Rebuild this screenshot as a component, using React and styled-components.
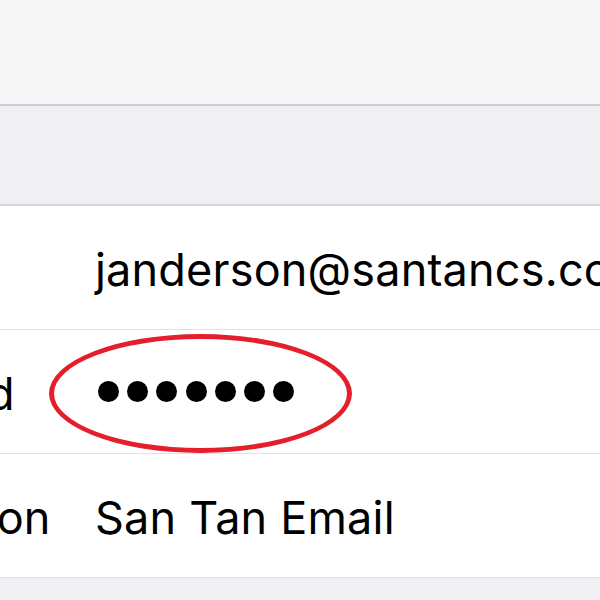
import React from "react";
import styled, { createGlobalStyle } from "styled-components";

const Global = createGlobalStyle`
  html, body { margin: 0; padding: 0; background: #efeff4; }
  body { font-family: Inter, "Noto Sans", sans-serif; overflow: hidden; }
`;

const Page = styled.div`
  width: 600px;
  height: 600px;
  overflow: hidden;
  background: #efeff4;
  display: flex;
  flex-direction: column;
`;

const TopBar = styled.div`
  height: 104px;
  background: #f7f7f8;
  border-bottom: 2px solid #cfced3;
  flex-shrink: 0;
`;

const SectionGap = styled.div`
  height: 98px;
  background: #efeff4;
  border-bottom: 2px solid #d6d5da;
  flex-shrink: 0;
`;

const Group = styled.div`
  background: #fff;
  display: flex;
  flex-direction: column;
  flex-shrink: 0;
`;

const Row = styled.div`
  position: relative;
  height: 123px;
  display: grid;
  grid-template-columns: 290px 1fr;
  align-items: center;
  margin-left: -195px;
  border-bottom: 1.5px solid #e1e1e4;
  white-space: nowrap;
`;

const Label = styled.span`
  font-size: 45px;
  color: #000;
  letter-spacing: 0.2px;
  padding-top: 3px;
`;

const Value = styled.span`
  font-size: 45px;
  color: #000;
  letter-spacing: 0.2px;
  padding-top: 3px;
`;

const Dots = styled.div`
  display: flex;
  gap: 8.2px;
  padding-left: 3px;
`;

const Dot = styled.span`
  width: 21px;
  height: 21px;
  border-radius: 50%;
  background: #000;
`;

const Circle = styled.div`
  position: absolute;
  left: 244px;
  top: 4px;
  width: 293px;
  height: 109px;
  border: 5px solid #e41f2b;
  border-radius: 50%;
  pointer-events: none;
`;

export default function App() {
  return (
    <Page>
      <Global />
      <TopBar />
      <SectionGap />
      <Group>
        <Row>
          <Label>Email</Label>
          <Value>janderson@santancs.com</Value>
        </Row>
        <Row>
          <Label>Password</Label>
          <Dots>
            {Array.from({ length: 7 }).map((_, i) => (
              <Dot key={i} />
            ))}
          </Dots>
          <Circle />
        </Row>
        <Row>
          <Label>Description</Label>
          <Value>San Tan Email</Value>
        </Row>
      </Group>
    </Page>
  );
}
